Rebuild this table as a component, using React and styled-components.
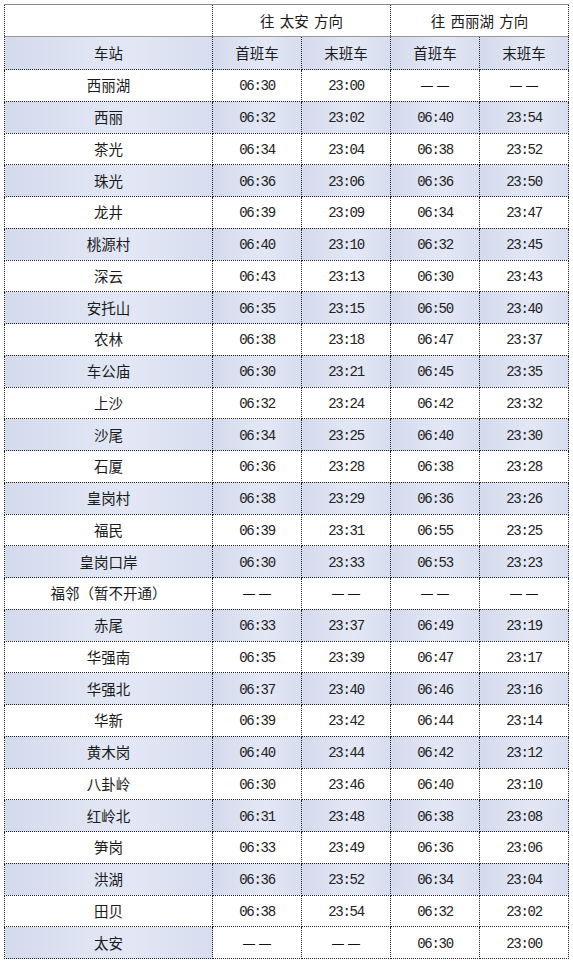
import React from "react";
import styled, { createGlobalStyle, css } from "styled-components";

const Global = createGlobalStyle`
  html, body { margin: 0; padding: 0; background: #fff; }
  body { font-family: "Noto Sans CJK SC", "Liberation Sans", sans-serif; }
`;

const Page = styled.div`
  padding: 4px 0 0 4px;
`;

const Table = styled.table`
  border-collapse: collapse;
  table-layout: fixed;
  width: 564px;
  color: #1a1a1a;
`;

const shade = css`
  background: linear-gradient(90deg, #d3daec 0%, #e0e5f3 45%, #e3e7f5 60%, #d6ddee 100%);
`;

const Cell = styled.td`
  border: 1px dotted #222;
  padding: 0;
  text-align: center;
  vertical-align: middle;
  font-size: 14.5px;
  line-height: 16px;
  ${(p) => (p.$shade ? shade : "background: #fff;")}
  ${(p) => p.$top && "border-top: 1px solid #8a8a8a;"}
  ${(p) => p.$headBottom && "border-bottom: 1px solid #9a9a9a;"}
`;

const Row = styled.tr`
  height: ${(p) => p.$h}px;
`;

const Time = styled.span`
  font-family: "Liberation Mono", monospace;
  font-size: 14px;
  letter-spacing: -1.3px;
  color: #222;
`;

const Dash = styled.span`
  font-family: "Liberation Sans", sans-serif;
  font-size: 12px;
  letter-spacing: 4px;
  margin-right: -4px;
  color: #111;
`;

const Head = styled.span`
  word-spacing: 2px;
`;

const data = [
  ["西丽湖", "06:30", "23:00", "-", "-"],
  ["西丽", "06:32", "23:02", "06:40", "23:54"],
  ["茶光", "06:34", "23:04", "06:38", "23:52"],
  ["珠光", "06:36", "23:06", "06:36", "23:50"],
  ["龙井", "06:39", "23:09", "06:34", "23:47"],
  ["桃源村", "06:40", "23:10", "06:32", "23:45"],
  ["深云", "06:43", "23:13", "06:30", "23:43"],
  ["安托山", "06:35", "23:15", "06:50", "23:40"],
  ["农林", "06:38", "23:18", "06:47", "23:37"],
  ["车公庙", "06:30", "23:21", "06:45", "23:35"],
  ["上沙", "06:32", "23:24", "06:42", "23:32"],
  ["沙尾", "06:34", "23:25", "06:40", "23:30"],
  ["石厦", "06:36", "23:28", "06:38", "23:28"],
  ["皇岗村", "06:38", "23:29", "06:36", "23:26"],
  ["福民", "06:39", "23:31", "06:55", "23:25"],
  ["皇岗口岸", "06:30", "23:33", "06:53", "23:23"],
  ["福邻（暂不开通）", "-", "-", "-", "-"],
  ["赤尾", "06:33", "23:37", "06:49", "23:19"],
  ["华强南", "06:35", "23:39", "06:47", "23:17"],
  ["华强北", "06:37", "23:40", "06:46", "23:16"],
  ["华新", "06:39", "23:42", "06:44", "23:14"],
  ["黄木岗", "06:40", "23:44", "06:42", "23:12"],
  ["八卦岭", "06:30", "23:46", "06:40", "23:10"],
  ["红岭北", "06:31", "23:48", "06:38", "23:08"],
  ["笋岗", "06:33", "23:49", "06:36", "23:06"],
  ["洪湖", "06:36", "23:52", "06:34", "23:04"],
  ["田贝", "06:38", "23:54", "06:32", "23:02"],
  ["太安", "-", "-", "06:30", "23:00"],
];

const Value = ({ v }) =>
  v === "-" ? <Dash>——</Dash> : <Time>{v}</Time>;

export default function App() {
  const last = data.length - 1;
  return (
    <Page>
      <Global />
      <Table>
        <colgroup>
          <col style={{ width: 208 }} />
          <col style={{ width: 89 }} />
          <col style={{ width: 89 }} />
          <col style={{ width: 89 }} />
          <col style={{ width: 89 }} />
        </colgroup>
        <tbody>
          <Row $h={32}>
            <Cell $top $headBottom></Cell>
            <Cell $top $headBottom colSpan={2}>
              <Head>往 太安 方向</Head>
            </Cell>
            <Cell $top $headBottom colSpan={2}>
              <Head>往 西丽湖 方向</Head>
            </Cell>
          </Row>
          <Row $h={33}>
            <Cell $shade>车站</Cell>
            <Cell $shade>首班车</Cell>
            <Cell $shade>末班车</Cell>
            <Cell $shade>首班车</Cell>
            <Cell $shade>末班车</Cell>
          </Row>
          {data.map((r, i) => {
            const sh = i % 2 === 1;
            return (
              <Row key={r[0]} $h={31.75}>
                <Cell $shade={sh}>{r[0]}</Cell>
                {r.slice(1).map((v, j) => (
                  <Cell key={j} $shade={sh && i !== last}>
                    <Value v={v} />
                  </Cell>
                ))}
              </Row>
            );
          })}
        </tbody>
      </Table>
    </Page>
  );
}
